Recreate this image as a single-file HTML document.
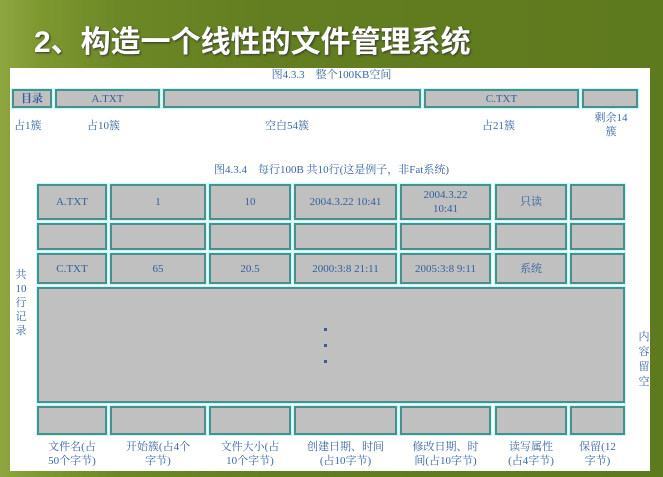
<!DOCTYPE html>
<html><head><meta charset="utf-8"><style>
*{margin:0;padding:0;box-sizing:border-box}
body{width:663px;height:477px;overflow:hidden;position:relative;
background:linear-gradient(90deg,#8fa640 0%,#7e9830 6%,#6c8826 18%,#637e20 40%,#5e7a1e 100%);
font-family:"Liberation Serif","Noto Serif CJK SC","Noto Sans CJK SC",serif}
.h{position:absolute;left:34px;top:17px;font:bold 30px "Liberation Sans","Noto Sans CJK SC",sans-serif;color:#fff;letter-spacing:0px;text-shadow:1px 1px 2px #333}
.p{position:absolute;left:10px;top:68px;width:640px;height:403px;background:#fff}
.c{position:absolute;background:#c0c0c0;border:2px solid #4c8f8a;box-shadow:0 0 0 1px #bff}
.t{position:absolute;color:#3a68a5;font-size:11px;text-align:center;line-height:14px;white-space:nowrap}
.ct{display:flex;align-items:center;justify-content:center;color:#2f5f9f;font-size:11px;line-height:14px;text-align:center}
</style></head><body>
<div class="h">2、构造一个线性的文件管理系统</div>
<div class="p"></div>
<div class="t" style="left:0;width:663px;top:68px">图4.3.3　整个100KB空间</div>
<div class="c ct" style="left:12px;top:89px;width:40px;height:19px;font-weight:bold">目录</div>
<div class="c ct" style="left:55px;top:89px;width:105px;height:19px">A.TXT</div>
<div class="c" style="left:163px;top:89px;width:258px;height:19px"></div>
<div class="c ct" style="left:424px;top:89px;width:155px;height:19px">C.TXT</div>
<div class="c" style="left:582px;top:89px;width:56px;height:19px"></div>
<div class="t" style="left:14px;top:119px">占1簇</div>
<div class="t" style="left:87px;top:119px">占10簇</div>
<div class="t" style="left:265px;top:119px">空白54簇</div>
<div class="t" style="left:482px;top:119px">占21簇</div>
<div class="t" style="left:586px;top:111px;width:50px;white-space:normal">剩余14<br>簇</div>
<div class="t" style="left:0;width:663px;top:163px">图4.3.4　每行100B 共10行(这是例子，非Fat系统)</div>

<div class="c ct" style="left:37px;top:184px;width:70px;height:36px">A.TXT</div>
<div class="c ct" style="left:110px;top:184px;width:96px;height:36px">1</div>
<div class="c ct" style="left:209px;top:184px;width:82px;height:36px">10</div>
<div class="c ct" style="left:294px;top:184px;width:103px;height:36px">2004.3.22 10:41</div>
<div class="c ct" style="left:400px;top:184px;width:91px;height:36px">2004.3.22<br>10:41</div>
<div class="c ct" style="left:495px;top:184px;width:72px;height:36px">只读</div>
<div class="c" style="left:570px;top:184px;width:55px;height:36px"></div>

<div class="c" style="left:37px;top:223px;width:70px;height:27px"></div>
<div class="c" style="left:110px;top:223px;width:96px;height:27px"></div>
<div class="c" style="left:209px;top:223px;width:82px;height:27px"></div>
<div class="c" style="left:294px;top:223px;width:103px;height:27px"></div>
<div class="c" style="left:400px;top:223px;width:91px;height:27px"></div>
<div class="c" style="left:495px;top:223px;width:72px;height:27px"></div>
<div class="c" style="left:570px;top:223px;width:55px;height:27px"></div>

<div class="c ct" style="left:37px;top:253px;width:70px;height:31px">C.TXT</div>
<div class="c ct" style="left:110px;top:253px;width:96px;height:31px">65</div>
<div class="c ct" style="left:209px;top:253px;width:82px;height:31px">20.5</div>
<div class="c ct" style="left:294px;top:253px;width:103px;height:31px">2000:3:8 21:11</div>
<div class="c ct" style="left:400px;top:253px;width:91px;height:31px">2005:3:8 9:11</div>
<div class="c ct" style="left:495px;top:253px;width:72px;height:31px">系统</div>
<div class="c" style="left:570px;top:253px;width:55px;height:31px"></div>

<div class="c" style="left:37px;top:287px;width:588px;height:116px"></div>
<div style="position:absolute;left:324px;top:328px;width:3px;height:3px;background:#2f5f9f"></div>
<div style="position:absolute;left:324px;top:344px;width:3px;height:3px;background:#2f5f9f"></div>
<div style="position:absolute;left:324px;top:360px;width:3px;height:3px;background:#2f5f9f"></div>

<div class="c" style="left:37px;top:406px;width:70px;height:29px"></div>
<div class="c" style="left:110px;top:406px;width:96px;height:29px"></div>
<div class="c" style="left:209px;top:406px;width:82px;height:29px"></div>
<div class="c" style="left:294px;top:406px;width:103px;height:29px"></div>
<div class="c" style="left:400px;top:406px;width:91px;height:29px"></div>
<div class="c" style="left:495px;top:406px;width:72px;height:29px"></div>
<div class="c" style="left:570px;top:406px;width:55px;height:29px"></div>

<div class="t" style="left:14px;top:268px;width:14px;white-space:normal;line-height:14px">共<br>10<br>行<br>记<br>录</div>
<div class="t" style="left:637px;top:330px;width:14px;white-space:normal;line-height:15px">内<br>容<br>留<br>空</div>

<div class="t" style="left:37px;top:440px;width:70px">文件名(占<br>50个字节)</div>
<div class="t" style="left:110px;top:440px;width:96px">开始簇(占4个<br>字节)</div>
<div class="t" style="left:209px;top:440px;width:82px">文件大小(占<br>10个字节)</div>
<div class="t" style="left:294px;top:440px;width:103px">创建日期、时间<br>(占10字节)</div>
<div class="t" style="left:400px;top:440px;width:91px">修改日期、时<br>间(占10字节)</div>
<div class="t" style="left:495px;top:440px;width:72px">读写属性<br>(占4字节)</div>
<div class="t" style="left:570px;top:440px;width:55px">保留(12<br>字节)</div>
</body></html>
